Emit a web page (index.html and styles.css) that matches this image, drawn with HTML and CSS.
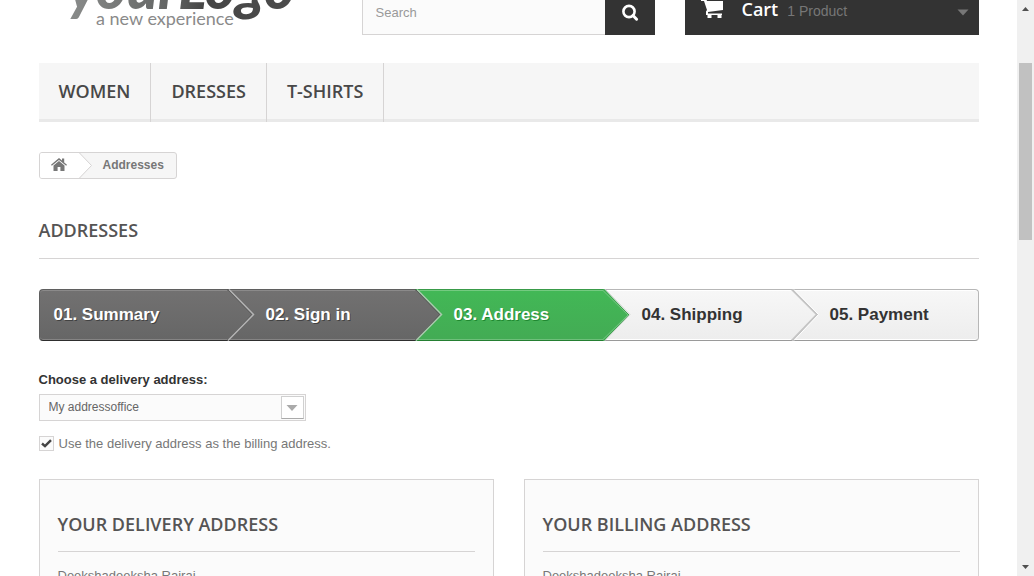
FILE: index.html
```html
<!DOCTYPE html>
<html lang="en">
<head>
<meta charset="utf-8">
<meta name="viewport" content="width=device-width, initial-scale=1">
<title>Addresses - yourLogo</title>
<link rel="stylesheet" href="styles.css">
</head>
<body>
<div class="viewport">
  <div class="page">
   <div class="container">
    <header class="header">
      <a class="logo" href="#" aria-label="yourLogo, a new experience">
        <svg width="293" height="35" viewBox="0 0 293 35">
          <defs>
            <linearGradient id="ink" x1="0" x2="1" y1="0" y2="0">
              <stop offset="0" stop-color="#8a8c8b"/>
              <stop offset="0.45" stop-color="#636564"/>
              <stop offset="0.6" stop-color="#454545"/>
              <stop offset="1" stop-color="#4c4c4c"/>
            </linearGradient>
          </defs>
          <text class="logo-name" x="29" y="9" fill="url(#ink)">yourLogo</text>
          <text class="logo-tag" x="57" y="25">a new experience</text>
        </svg>
      </a>
      <form class="search">
        <input class="search-input" type="search" placeholder="Search" aria-label="Search">
        <button class="search-button" type="button" aria-label="Submit search">
          <svg width="18" height="18" viewBox="0 0 18 18" fill="none" stroke="#fff">
            <circle cx="8" cy="7.500" r="5.600" stroke-width="2.600"/>
            <path d="M12 11.500L15.600 15.200" stroke-width="3" stroke-linecap="round"/>
          </svg>
        </button>
      </form>
      <a class="cart" href="#">
        <svg class="cart-icon" width="23" height="20" viewBox="0 0 23 20" fill="#fff">
          <path d="M0 0H5L6 3H22V12L7 14V15.500H21V17H20.500V20H16.500V17H10.500V20H6.500V17H5V13.500L6 12L3 3H0Z"/>
        </svg>
        <b class="cart-title">Cart</b>
        <span class="cart-count">1 Product</span>
        <svg class="cart-caret" width="12" height="7" viewBox="0 0 12 7" fill="#777"><path d="M0.500 0.500H11.500L6 6.500Z"/></svg>
      </a>
    </header>

    <nav class="menu">
      <a class="menu-item" href="#">WOMEN</a>
      <a class="menu-item" href="#">DRESSES</a>
      <a class="menu-item" href="#">T-SHIRTS</a>
    </nav>

    <main>
      <div class="breadcrumb">
        <a class="home" href="#" aria-label="Home">
          <svg width="16" height="13" viewBox="0 0 16 13" fill="#777">
            <path d="M8 0L11 2.500V0.500H13.200V4.400L16 6.800L15.200 7.800L8 1.900L0.800 7.800L0 6.800Z"/>
            <path d="M8 3L13.500 7.500V13H9.400V9H6.600V13H2.500V7.500Z"/>
          </svg>
        </a>
        <svg class="chevron" width="14" height="25" viewBox="0 0 14 25">
          <path d="M0 0L12.500 12.500L0 25Z" fill="#fff"/>
          <path d="M0.500 0L12.500 12.500L0.500 25" fill="none" stroke="#d6d4d4"/>
        </svg>
        <span class="crumb">Addresses</span>
      </div>

      <h1 class="page-title">ADDRESSES</h1>

      <svg class="definitions" aria-hidden="true">
        <linearGradient id="done" x1="0" x2="0" y1="0" y2="1"><stop offset="0" stop-color="#727171"/><stop offset="1" stop-color="#666"/></linearGradient>
        <linearGradient id="current" x1="0" x2="0" y1="0" y2="1"><stop offset="0" stop-color="#42b856"/><stop offset="1" stop-color="#43ab54"/></linearGradient>
        <linearGradient id="todo" x1="0" x2="0" y1="0" y2="1"><stop offset="0" stop-color="#f7f7f7"/><stop offset="1" stop-color="#ededed"/></linearGradient>
      </svg>
      <ol class="steps">
        <li class="step done"><a href="#">01. Summary</a>
          <svg class="arrow" width="28" height="52" viewBox="0 0 28 52">
            <path d="M0 1H2L26 26L2 51H0Z" fill="url(#done)"/>
            <path d="M0.500 0.500L25 25.500L0.500 51.500" fill="none" stroke="#515151"/>
            <path d="M2 0.500L26.500 25.500L1 51.500" fill="none" stroke="#b4b4b4" stroke-width="1.500"/>
          </svg>
        </li>
        <li class="step done"><a href="#">02. Sign in</a>
          <svg class="arrow" width="28" height="52" viewBox="0 0 28 52">
            <path d="M0 1H1L26 26L1 51H0Z" fill="url(#done)"/>
            <path d="M0.500 0.500L25 25.500L0.500 51.500" fill="none" stroke="#484848"/>
            <path d="M2 0.500L26.500 25.500L1 51.500" fill="none" stroke="#a9c9ad" stroke-width="1.500"/>
          </svg>
        </li>
        <li class="step current" aria-current="step"><span>03. Address</span>
          <svg class="arrow" width="28" height="52" viewBox="0 0 28 52">
            <path d="M0 0H1L26 26L1 52H0Z" fill="url(#current)"/>
            <path d="M0 1.500L25 26L0 50.500" fill="none" stroke="#77c684"/>
            <path d="M1 0.500L26 26L1 51.500" fill="none" stroke="#3a9f4a"/>
            <path d="M2.500 0.500L27 25.500L2 51.500" fill="none" stroke="#d2d5d2"/>
          </svg>
        </li>
        <li class="step todo"><span>04. Shipping</span>
          <svg class="arrow" width="28" height="52" viewBox="0 0 28 52">
            <path d="M0 1H1L26 26L1 51H0Z" fill="url(#todo)"/>
            <path d="M1 0.500L26 25.500L1 51.500" fill="none" stroke="#c4c4c4" stroke-width="2"/>
            <path d="M3 0.500L27.500 25.500L3 51.500" fill="none" stroke="#fff"/>
          </svg>
        </li>
        <li class="step todo"><span>05. Payment</span></li>
      </ol>

      <form class="choose">
        <label class="choose-label" for="delivery">Choose a delivery address:</label>
        <div class="select">
          <select id="delivery"><option>My addressoffice</option></select>
          <span class="select-button"><svg width="12" height="6" viewBox="0 0 12 6" fill="#aaa"><path d="M0.500 0H11.500L6 6Z"/></svg></span>
        </div>
        <div class="same">
          <span class="tick">
            <input type="checkbox" id="same" checked>
            <svg width="11" height="9" viewBox="0 0 11 9"><path d="M1 4.500L4 7.200L10 1.200" fill="none" stroke="#444" stroke-width="2.400"/></svg>
          </span>
          <label for="same">Use the delivery address as the billing address.</label>
        </div>
      </form>

      <div class="addresses">
        <section class="address">
          <h2 class="address-title">YOUR DELIVERY ADDRESS</h2>
          <p>Deekshadeeksha Rajraj</p>
        </section>
        <section class="address">
          <h2 class="address-title">YOUR BILLING ADDRESS</h2>
          <p>Deekshadeeksha Rajraj</p>
        </section>
      </div>
    </main>
   </div>
  </div>
  <div class="scrollbar" aria-hidden="true">
    <svg width="7" height="4" viewBox="0 0 7 4" fill="#505050"><path d="M0 4L3.500 0L7 4Z"/></svg>
    <div class="track"><div class="thumb"></div></div>
    <svg width="7" height="4" viewBox="0 0 7 4" fill="#505050"><path d="M0 0L3.500 4L7 0Z"/></svg>
  </div>
</div>
</body>
</html>
```
FILE: styles.css
```css
* { box-sizing: border-box; }
body {
  margin: 0;
  background: #fff;
  color: #777;
  font: 13px/18px "Liberation Sans", Arial, sans-serif;
}
a { color: inherit; text-decoration: none; }
h1, h2, p, ol { margin: 0; padding: 0; }

.viewport { display: flex; height: 100vh; overflow: hidden; }
.page { flex: 1; min-width: 0; padding: 0 15px; overflow: hidden; }
.container { max-width: 940px; margin: 0 auto; }

.header { display: flex; align-items: stretch; height: 35px; }
.logo { flex: 1; overflow: hidden; }
.logo svg { display: block; }
.logo-name { font: italic 900 58px Lato, sans-serif; }
.logo-tag { font: 18px Lato, sans-serif; fill: #8a8a8a; }
.search { display: flex; width: 293px; margin-right: 30px; }
.search-input {
  flex: 1;
  min-width: 0;
  padding: 0 13px 8px;
  border: 1px solid #d6d4d4;
  border-width: 0 0 1px 1px;
  border-radius: 0;
  background: #fbfbfb;
  color: #686666;
  font: inherit;
  appearance: none;
}
.search-input::placeholder { color: #999; opacity: 1; }
.search-button {
  display: flex;
  justify-content: center;
  width: 50px;
  padding: 4px 0 0;
  border: 0;
  background: #333;
}
.cart {
  display: flex;
  align-items: flex-start;
  width: 294px;
  padding: 0 10px 0 16px;
  background: #333;
}
.cart-icon { margin-top: -2px; }
.cart-title {
  margin-left: 18px;
  color: #fff;
  font: 600 18px/18px "Open Sans", sans-serif;
}
.cart-count { margin: 2px 0 0 9px; color: #777; font-size: 14px; }
.cart-caret { margin: 9px 0 0 auto; }

.menu {
  display: flex;
  height: 59px;
  margin-top: 28px;
  background: linear-gradient(#f6f6f6 56px, #e9e9e9 56px);
}
.menu-item {
  padding: 17px 20px;
  border-right: 1px solid #d6d4d4;
  color: #484848;
  font: 600 18px/22px "Open Sans", sans-serif;
}

.breadcrumb {
  display: inline-flex;
  align-items: stretch;
  height: 27px;
  margin-top: 30px;
  border: 1px solid #d6d4d4;
  border-radius: 3px;
  overflow: hidden;
  background: #f6f6f6;
  font-size: 12px;
  font-weight: bold;
  line-height: 24px;
  vertical-align: top;
}
.home { width: 39px; padding: 5px 11px; background: #fff; }
.home svg { display: block; }
.crumb { padding: 0 12px 0 10px; }

.page-title {
  margin-top: 40px;
  padding-bottom: 17px;
  border-bottom: 1px solid #d6d4d4;
  color: #555454;
  font: 600 18px/22px "Open Sans", sans-serif;
}

.definitions { position: absolute; width: 0; height: 0; }
.steps {
  display: grid;
  grid-template-columns: repeat(5, 1fr);
  height: 52px;
  margin-top: 30px;
  list-style: none;
  font-size: 17px;
  font-weight: bold;
  line-height: 50px;
}
.step {
  position: relative;
  padding-left: 39px;
  border: 1px solid;
  border-width: 1px 0;
}
.step:first-child { padding-left: 14px; border-left-width: 1px; border-radius: 4px 0 0 4px; }
.step:last-child { border-right-width: 1px; border-radius: 0 4px 4px 0; }
.done {
  border-color: #5f5f5f #5f5f5f #2e2e2e;
  background: linear-gradient(#727171, #666);
  box-shadow: inset 0 1px #8b8a8a, inset 0 -1px #858484;
  color: #fff;
  text-shadow: 1px 1px rgba(0, 0, 0, 0.4);
}
.current {
  border-color: #399b49 #399b49 #247f32;
  background: linear-gradient(#42b856, #43ab54);
  box-shadow: inset 0 1px #74ca81, inset 0 -1px #6fbf7b;
  color: #fff;
  text-shadow: 1px 1px #208931;
}
.todo {
  border-color: #b7b7b7 #b7b7b7 #9a9a9a;
  background: linear-gradient(#f7f7f7, #ededed);
  box-shadow: inset 0 1px #fff, inset 0 -1px #fff;
  color: #333;
}
.arrow { position: absolute; z-index: 1; top: -1px; left: 100%; }

.choose { display: flex; flex-direction: column; align-items: flex-start; margin-top: 30px; }
.choose-label { color: #333; font-weight: bold; }
.select { display: grid; width: 267px; height: 27px; margin-top: 5px; }
.select select {
  grid-area: 1 / 1;
  width: 100%;
  padding: 0 30px 2px 9px;
  border: 1px solid #d6d4d4;
  border-radius: 0;
  background: #fbfbfb;
  color: #666;
  font: 12px "Liberation Sans", Arial, sans-serif;
  appearance: none;
}
.select-button {
  display: grid;
  grid-area: 1 / 1;
  place-items: center;
  place-self: center end;
  width: 23px;
  height: 23px;
  margin-right: 2px;
  border: 1px solid #d0d0d0;
  border-bottom-color: #aaa;
  background: #fff;
  pointer-events: none;
}
.same { display: flex; align-items: center; gap: 5px; margin-top: 13px; line-height: 19px; }
.tick { display: grid; place-items: center; width: 15px; height: 15px; }
.tick input {
  grid-area: 1 / 1;
  width: 15px;
  height: 15px;
  margin: 0;
  border: 1px solid #d6d4d4;
  background: #fbfbfb;
  appearance: none;
}
.tick svg { grid-area: 1 / 1; z-index: 1; pointer-events: none; }

.addresses { display: grid; grid-template-columns: 1fr 1fr; gap: 30px; margin-top: 26px; }
.address {
  min-height: 300px;
  padding: 33px 18px 18px;
  border: 1px solid #d6d4d4;
  background: #fbfbfb;
}
.address-title {
  margin-bottom: 15px;
  padding-bottom: 16px;
  border-bottom: 1px solid #d6d4d4;
  color: #555454;
  font: 600 18px/22px "Open Sans", sans-serif;
}

.scrollbar {
  display: flex;
  flex-direction: column;
  align-items: center;
  width: 17px;
  padding: 7px 0;
  background: #f0f0f0;
}
.track { flex: 1; width: 13px; padding-top: 52px; }
.thumb { height: 177px; background: #c1c1c1; }
```
